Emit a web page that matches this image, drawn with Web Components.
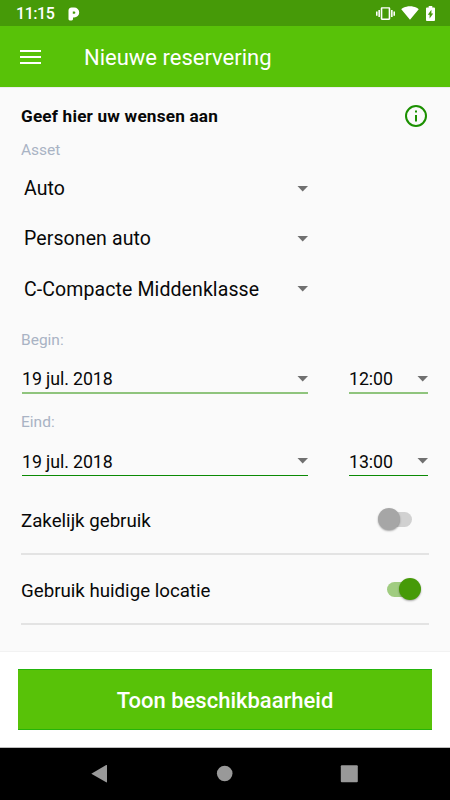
<!DOCTYPE html>
<html lang="nl">
<head>
<meta charset="utf-8">
<title>Nieuwe reservering</title>
<style>
    body {
        margin: 0;
        width: 450px;
        height: 800px;
        overflow: hidden;
        background: #fafafa;
        font-family: Roboto, "Liberation Sans", sans-serif;
        color: #080808;
    }
</style>
</head>
<body>
<reservation-app></reservation-app>

<script>
class StatusBar extends HTMLElement {
    constructor() {
        super();
        this.attachShadow({mode: "open"}).innerHTML = `
            <style>
                :host {
                    display: flex;
                    align-items: center;
                    box-sizing: border-box;
                    height: 26px;
                    padding: 1px 15px 0 16px;
                    background: #469a08;
                    color: #fff;
                }
                .time {
                    width: 52px;
                    font-size: 16px;
                    font-weight: 500;
                    line-height: 24px;
                    letter-spacing: -0.45px;
                }
                .icons {
                    display: flex;
                    align-items: center;
                    margin-left: auto;
                    margin-top: -1px;
                }
                svg { display: block; fill: #fff; }
                .wifi { margin: 0 7px 0 6px; }
            </style>
            <span class="time">11:15</span>
            <svg width="12" height="14" viewBox="0 0 12 14">
                <path fill-rule="evenodd" d="M.5 3.500C.5 1.600 2 .5 3.500.5H6.200a5 5 0 0 1 0 10H5V12c0 1-1 1.600-2.200 1.600S.5 13 .5 12zM4.800 4.500V6.800h1.400a1.150 1.150 0 0 0 0-2.300z"/>
            </svg>
            <div class="icons">
                <svg width="19" height="17" viewBox="0 0 24 24" preserveAspectRatio="none"><path d="M0 15h2V9H0v6zm3 2h2V7H3v10zm19-8v6h2V9h-2zm-3 8h2V7h-2v10zM16.500 3h-9C6.670 3 6 3.670 6 4.500v15c0 .83.67 1.500 1.500 1.500h9c.83 0 1.500-.67 1.500-1.500v-15c0-.83-.67-1.500-1.500-1.500zM16 19H8V5h8v14z"/></svg>
                <svg class="wifi" width="18" height="14" viewBox="0 2.500 24 19.500" preserveAspectRatio="none"><path d="M12 21.500L23.640 7c-.45-.34-4.930-4-11.640-4C5.280 3 .81 6.660.36 7z"/></svg>
                <svg width="9" height="15" viewBox="7 2 10 20" preserveAspectRatio="none"><path d="M15.670 4H14V2h-4v2H8.330C7.600 4 7 4.600 7 5.330v15.330C7 21.400 7.600 22 8.330 22h7.330c.74 0 1.340-.6 1.340-1.330V5.330C17 4.600 16.400 4 15.670 4zM11 18.500v-5H9L13 7v5h2z"/></svg>
            </div>`;
    }
}

class AppBar extends HTMLElement {
    constructor() {
        super();
        this.attachShadow({mode: "open"}).innerHTML = `
            <style>
                :host {
                    display: flex;
                    align-items: center;
                    box-sizing: border-box;
                    height: 61px;
                    padding: 2px 20px 0;
                    background: #58c208;
                    color: #fff;
                }
                .menu {
                    display: flex;
                    flex-direction: column;
                    gap: 4px;
                    width: 21px;
                    margin: -1px 43px 0 0;
                }
                .menu i { height: 2.3px; background: #fff; }
                .title {
                    font-size: 22px;
                    line-height: 30px;
                    white-space: nowrap;
                }
            </style>
            <div class="menu"><i></i><i></i><i></i></div>
            <span class="title"><slot></slot></span>`;
    }
}

class FieldLabel extends HTMLElement {
    constructor() {
        super();
        this.attachShadow({mode: "open"}).innerHTML = `
            <style>
                :host {
                    display: block;
                    font-size: 15.500px;
                    line-height: 20px;
                    color: #a9b3c4;
                }
            </style>
            <slot></slot>`;
    }
}

class DropDown extends HTMLElement {
    constructor() {
        super();
        this.attachShadow({mode: "open"}).innerHTML = `
            <style>
                :host {
                    display: flex;
                    align-items: center;
                    justify-content: space-between;
                    box-sizing: border-box;
                    white-space: nowrap;
                }
                svg { display: block; fill: #707070; }
            </style>
            <slot></slot>
            <svg width="11" height="6" viewBox="0 0 11 6"><path d="M.5 0h10.500L5.700 5.500z"/></svg>`;
    }
}

class SwitchRow extends HTMLElement {
    constructor() {
        super();
        this.attachShadow({mode: "open"}).innerHTML = `
            <style>
                :host {
                    display: flex;
                    align-items: center;
                    justify-content: space-between;
                    box-sizing: border-box;
                    height: 70px;
                    border-bottom: 2px solid #e3e3e3;
                    font-size: 18.700px;
                }
                span { padding-top: 4px; }
                .switch {
                    display: flex;
                    align-items: center;
                    box-sizing: border-box;
                    width: 25.500px;
                    height: 15.500px;
                    margin: 1px 17px 0 0;
                    border-radius: 8px;
                    background: #d1d1d1;
                }
                .thumb {
                    flex: none;
                    width: 22px;
                    height: 22px;
                    margin-left: -9px;
                    border-radius: 50%;
                    background: #a6a6a6;
                    box-shadow: 0 1px 2px rgba(0, 0, 0, 0.35);
                }
                :host([on]) .switch {
                    justify-content: flex-end;
                    margin-right: 16px;
                    width: 26px;
                    background: #a0cc80;
                }
                :host([on]) .thumb {
                    margin: 0 -8px 0 0;
                    background: #469a08;
                }
            </style>
            <span><slot></slot></span>
            <div class="switch"><div class="thumb"></div></div>`;
    }
}

class ActionFooter extends HTMLElement {
    constructor() {
        super();
        this.attachShadow({mode: "open"}).innerHTML = `
            <style>
                :host {
                    display: block;
                    box-sizing: border-box;
                    height: 97px;
                    padding: 17px 18px 0;
                    border-top: 1px solid #f2f2f2;
                    border-bottom: 1px solid #bdbdbd;
                    background: #fff;
                }
                button {
                    display: block;
                    box-sizing: border-box;
                    width: 100%;
                    height: 61px;
                    padding: 2px 0 0;
                    border: solid #25b40a;
                    border-width: 1px 0;
                    background: #58c208;
                    color: #fff;
                    font: 500 22px/30px Roboto, sans-serif;
                }
            </style>
            <button><slot></slot></button>`;
    }
}

class SystemNav extends HTMLElement {
    constructor() {
        super();
        this.attachShadow({mode: "open"}).innerHTML = `
            <style>
                :host {
                    display: flex;
                    align-items: center;
                    justify-content: space-between;
                    box-sizing: border-box;
                    height: 52px;
                    padding: 0 92px 0 91px;
                    background: #000;
                }
                svg { display: block; fill: #999; }
            </style>
            <svg width="17" height="18"><path d="M.3 8.700L15.200.100q.8-.4.800.500V16.800q0 .9-.8.500z"/></svg>
            <svg width="17" height="18"><circle cx="8.700" cy="8.500" r="7.800"/></svg>
            <svg width="18" height="18"><rect x=".8" y=".2" width="17" height="17" rx="1"/></svg>`;
    }
}

class ReservationForm extends HTMLElement {
    constructor() {
        super();
        this.attachShadow({mode: "open"}).innerHTML = `
            <style>
                :host {
                    display: block;
                    box-sizing: border-box;
                    height: 564px;
                    padding: 15px 21px 0;
                    border-top: 1px solid #ededed;
                }
                header {
                    display: flex;
                    align-items: center;
                    justify-content: space-between;
                    height: 26px;
                }
                h1 {
                    margin: 0;
                    font-size: 17.200px;
                    line-height: 24px;
                    font-weight: 700;
                    letter-spacing: 0.18px;
                }
                header svg { display: block; margin: 0 1px 1px 0; }
                .asset {
                    width: 287px;
                    height: 50.300px;
                    padding-left: 3px;
                    font-size: 19.500px;
                    letter-spacing: 0.1px;
                }
                .when { display: flex; gap: 41px; width: 407px; padding-left: 1px; box-sizing: border-box; }
                .when drop-down {
                    height: 32px;
                    padding-top: 4px;
                    border-bottom: 2px solid #8fc47d;
                    font-size: 17.800px;
                    letter-spacing: -0.1px;
                }
                .when.end drop-down { border-bottom: 1px solid #0b8a04; }
                .date { width: 286px; }
                .time { width: 79px; }
            </style>
            <header>
                <h1>Geef hier uw wensen aan</h1>
                <svg width="24" height="24" viewBox="0 0 24 24">
                    <circle cx="12" cy="12" r="10" fill="none" stroke="#1b9000" stroke-width="2"/>
                    <path fill="#1b9000" d="M11 6.500h2v2h-2zM11 11h2v6.500h-2z"/>
                </svg>
            </header>
            <field-label style="margin-top: 11px">Asset</field-label>
            <drop-down class="asset" style="margin-top: 3.400px">Auto</drop-down>
            <drop-down class="asset">Personen auto</drop-down>
            <drop-down class="asset">C-Compacte Middenklasse</drop-down>
            <field-label style="margin-top: 15.700px">Begin:</field-label>
            <div class="when" style="margin-top: 12px">
                <drop-down class="date">19 jul. 2018</drop-down>
                <drop-down class="time">12:00</drop-down>
            </div>
            <field-label style="margin-top: 18px">Eind:</field-label>
            <div class="when end" style="margin-top: 12px">
                <drop-down class="date">19 jul. 2018</drop-down>
                <drop-down class="time">13:00</drop-down>
            </div>
            <switch-row style="margin-top: 9px">Zakelijk gebruik</switch-row>
            <switch-row on>Gebruik huidige locatie</switch-row>`;
    }
}

class ReservationApp extends HTMLElement {
    constructor() {
        super();
        this.attachShadow({mode: "open"}).innerHTML = `
            <style>
                :host {
                    display: flex;
                    flex-direction: column;
                    height: 800px;
                }
            </style>
            <status-bar></status-bar>
            <app-bar>Nieuwe reservering</app-bar>
            <reservation-form></reservation-form>
            <action-footer>Toon beschikbaarheid</action-footer>
            <system-nav></system-nav>`;
    }
}

customElements.define("status-bar", StatusBar);
customElements.define("app-bar", AppBar);
customElements.define("field-label", FieldLabel);
customElements.define("drop-down", DropDown);
customElements.define("switch-row", SwitchRow);
customElements.define("action-footer", ActionFooter);
customElements.define("system-nav", SystemNav);
customElements.define("reservation-form", ReservationForm);
customElements.define("reservation-app", ReservationApp);
</script>
</body>
</html>
